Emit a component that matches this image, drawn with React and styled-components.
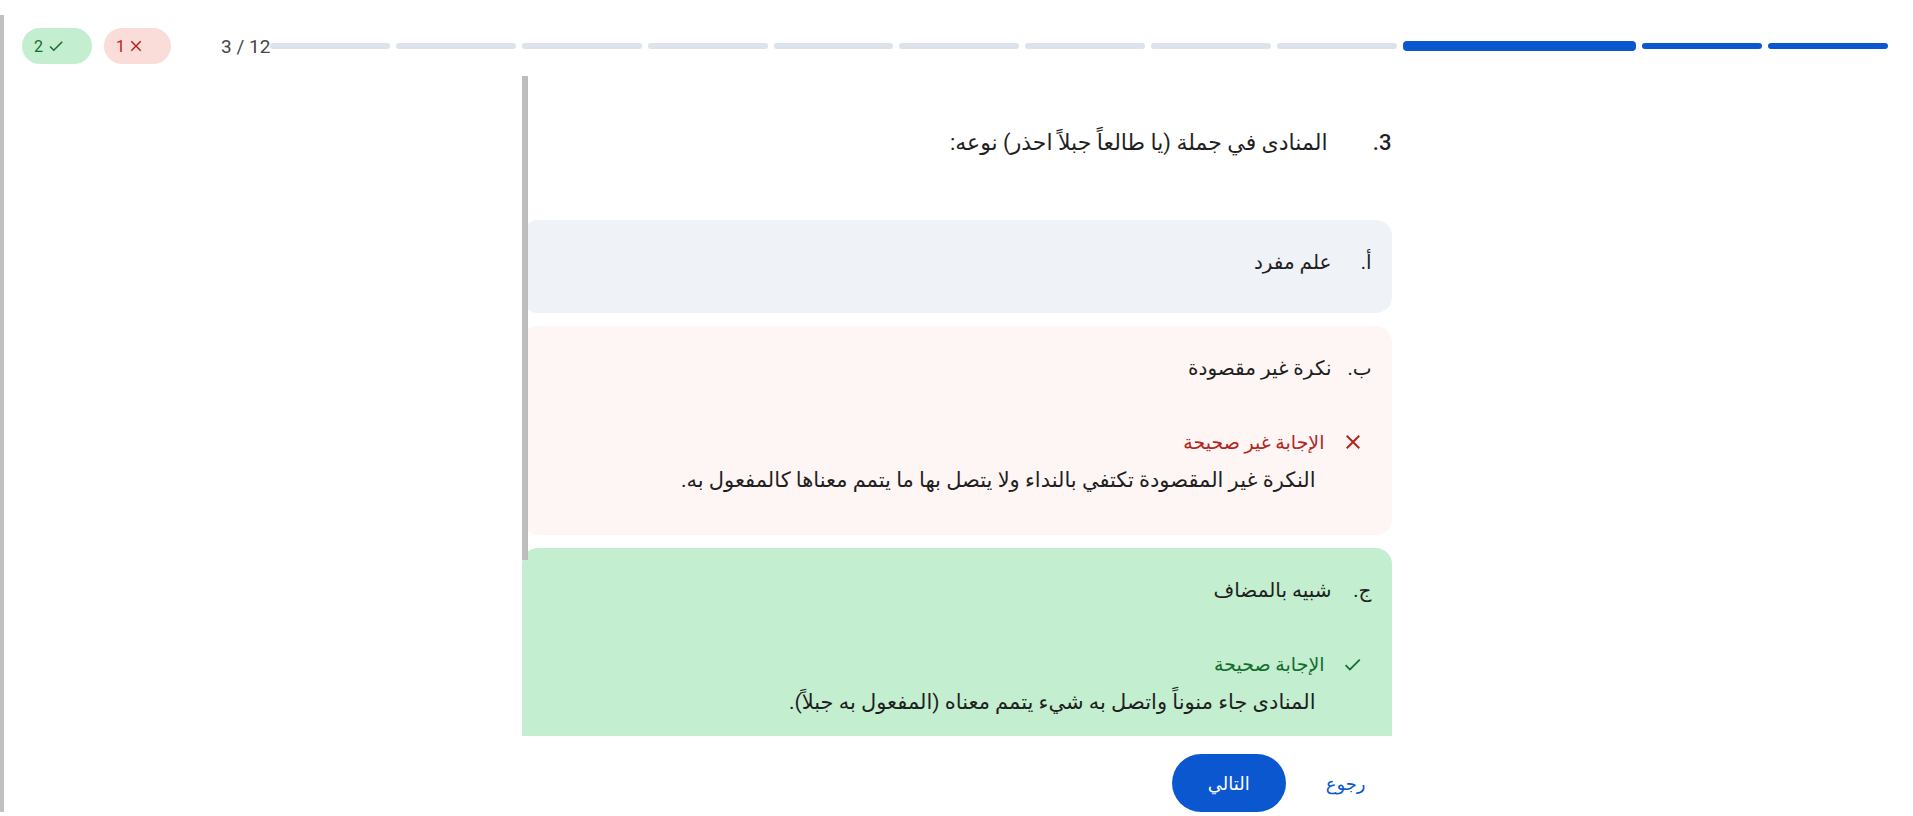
import styled, { createGlobalStyle } from "styled-components"

const GlobalStyle = createGlobalStyle`
  * {
    box-sizing: border-box;
  }
  html, body {
    margin: 0;
    padding: 0;
    background: #ffffff;
  }
  body {
    font-family: Roboto, "Noto Sans", "DejaVu Sans", sans-serif;
    color: #1f1f1f;
    overflow: hidden;
  }
`

const TOTAL = 12
const CURRENT = 3

const options = [
  { key: "أ.", text: "علم مفرد" },
  {
    key: "ب.",
    text: "نكرة غير مقصودة",
    status: "wrong",
    label: "الإجابة غير صحيحة",
    note: "النكرة غير المقصودة تكتفي بالنداء ولا يتصل بها ما يتمم معناها كالمفعول به.",
  },
  {
    key: "ج.",
    text: "شبيه بالمضاف",
    status: "right",
    label: "الإجابة صحيحة",
    note: "المنادى جاء منوناً واتصل به شيء يتمم معناه (المفعول به جبلاً).",
  },
  { key: "د.", text: "نكرة مقصودة" },
]

const CheckIcon = ({ size = 20 }) => (
  <svg width={size} height={size} viewBox="0 0 24 24" fill="currentColor">
    <path d="M9 16.17 4.83 12l-1.42 1.41L9 19 21 7l-1.41-1.41z" />
  </svg>
)

const CloseIcon = ({ size = 20 }) => (
  <svg width={size} height={size} viewBox="0 0 24 24" fill="currentColor">
    <path d="M19 6.41 17.59 5 12 10.59 6.41 5 5 6.41 10.59 12 5 17.59 6.41 19 12 13.41 17.59 19 19 17.59 13.41 12z" />
  </svg>
)

const App = () => {
  const segments = Array.from({ length: TOTAL }, (_, i) => i + 1)

  return (
    <>
      <GlobalStyle />
      <PageThumb />
      <Header>
        <ScorePill $tone="good">
          <span>2</span>
          <CheckIcon size={18} />
        </ScorePill>
        <ScorePill $tone="bad">
          <span>1</span>
          <CloseIcon size={18} />
        </ScorePill>
        <Counter>
          {CURRENT} / {TOTAL}
        </Counter>
        <Progress>
          {segments.map((n) => (
            <Segment
              key={n}
              $done={n < CURRENT}
              $current={n === CURRENT}
            />
          ))}
        </Progress>
      </Header>

      <Main>
        <ScrollArea>
          <ScrollThumb />
          <Question>
            <QuestionNumber>{CURRENT}.</QuestionNumber>
            <QuestionText>المنادى في جملة (يا طالعاً جبلاً احذر) نوعه:</QuestionText>
          </Question>

          {options.map((opt) => (
            <OptionCard key={opt.key} $status={opt.status}>
              <OptionRow>
                <Marker>{opt.key}</Marker>
                <span>{opt.text}</span>
              </OptionRow>
              {opt.status && (
                <Feedback>
                  <StatusRow $status={opt.status}>
                    <StatusIcon>
                      {opt.status === "right" ? <CheckIcon size={21} /> : <CloseIcon size={24} />}
                    </StatusIcon>
                    <span>{opt.label}</span>
                  </StatusRow>
                  <Explanation>{opt.note}</Explanation>
                </Feedback>
              )}
            </OptionCard>
          ))}
        </ScrollArea>

        <Actions>
          <BackButton>رجوع</BackButton>
          <NextButton>التالي</NextButton>
        </Actions>
      </Main>
    </>
  )
}

const PageThumb = styled.div`
  position: fixed;
  left: 0;
  top: 15px;
  width: 4px;
  height: 797px;
  background-color: #c1c1c1;
`

const Header = styled.header`
  display: flex;
  align-items: center;
  direction: ltr;
  height: 36px;
  margin: 28px 25px 0 22px;
`

const ScorePill = styled.div`
  display: flex;
  align-items: center;
  gap: ${(p) => (p.$tone === "good" ? "4px" : "2px")};
  height: 36px;
  padding: 0 ${(p) => (p.$tone === "good" ? "27px" : "26px")} 0 12px;
  border-radius: 18px;
  font-size: 16px;
  background-color: ${(p) => (p.$tone === "good" ? "#c4eed0" : "#fadcd9")};
  color: ${(p) => (p.$tone === "good" ? "#146c2e" : "#b3261e")};

  & + & {
    margin-left: 12px;
  }
`

const Counter = styled.div`
  margin-left: 50px;
  font-size: 19px;
  color: #444746;
  white-space: nowrap;
`

const Progress = styled.div`
  flex: 1;
  display: flex;
  align-items: center;
  gap: 6px;
  direction: rtl;
`

const Segment = styled.div`
  flex: ${(p) => (p.$current ? 1.95 : 1)} 1 0;
  height: ${(p) => (p.$current ? "10px" : "6px")};
  border-radius: ${(p) => (p.$current ? "4px" : "3px")};
  background-color: ${(p) => (p.$done || p.$current ? "#0b57d0" : "#dde3ea")};
`

const Main = styled.main`
  width: 870px;
  margin: 12px auto 0;
  direction: rtl;
`

const ScrollArea = styled.div`
  position: relative;
  height: 660px;
  overflow: hidden;
`

const ScrollThumb = styled.div`
  position: absolute;
  left: 0;
  top: 0;
  z-index: 1;
  width: 6px;
  height: 484px;
  background-color: #bdbdbd;
`

const Question = styled.div`
  display: flex;
  align-items: baseline;
  gap: 24px;
  padding-top: 48px;
  margin-bottom: 58px;
  line-height: 38px;
  font-size: 22px;
`

const QuestionNumber = styled.span`
  flex-shrink: 0;
  width: 40px;
  font-size: 22px;
  font-weight: 500;
`

const QuestionText = styled.span``

const OptionCard = styled.div`
  padding: 18px 20px 27px;
  border-radius: 16px;
  background-color: ${(p) =>
    p.$status === "right" ? "#c4eed0" : p.$status === "wrong" ? "#fdf6f5" : "#eff2f7"};

  & + & {
    margin-top: 13px;
  }
`

const OptionRow = styled.div`
  display: flex;
  align-items: center;
  gap: 16px;
  min-height: 48px;
  font-size: 20px;
`

const Marker = styled.span`
  flex-shrink: 0;
  width: 24px;
`

const Feedback = styled.div`
  margin: 38px 0 12px;
`

const StatusRow = styled.div`
  display: flex;
  align-items: center;
  gap: 16px;
  height: 24px;
  padding-right: 7px;
  font-size: 19px;
  color: ${(p) => (p.$status === "right" ? "#146c2e" : "#b3261e")};
`

const StatusIcon = styled.span`
  display: flex;
  align-items: center;
  justify-content: center;
  width: 24px;
  height: 24px;
`

const Explanation = styled.p`
  margin: 10px 0 0;
  padding-right: 56px;
  font-size: 21px;
  line-height: 32px;
`

const Actions = styled.div`
  display: flex;
  align-items: center;
  gap: 24px;
  height: 58px;
  margin-top: 18px;
  padding-right: 10px;
`

const BackButton = styled.button`
  height: 56px;
  padding: 0 16px;
  border: none;
  background: none;
  font-family: inherit;
  font-size: 18px;
  color: #0b57d0;
`

const NextButton = styled.button`
  height: 58px;
  padding: 0 36px;
  border: none;
  border-radius: 29px;
  background-color: #0b57d0;
  font-family: inherit;
  font-size: 18px;
  font-weight: 500;
  color: #ffffff;
`

export default App
